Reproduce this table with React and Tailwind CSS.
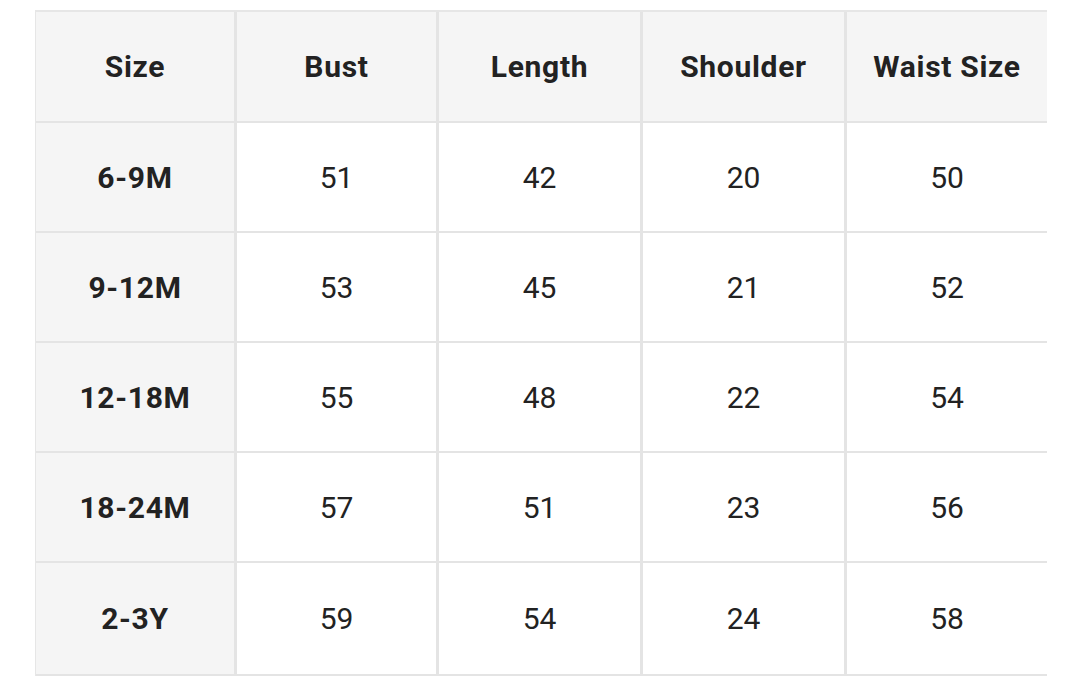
import React from 'react';

const headers = ['Size', 'Bust', 'Length', 'Shoulder', 'Waist Size'];

const rows = [
  ['6-9M', '51', '42', '20', '50'],
  ['9-12M', '53', '45', '21', '52'],
  ['12-18M', '55', '48', '22', '54'],
  ['18-24M', '57', '51', '23', '56'],
  ['2-3Y', '59', '54', '24', '58'],
];

const cols = 'grid grid-cols-[201px_202px_204px_204px_200px]';

export default function App() {
  return (
    <div className="w-[1080px] h-[687px] bg-white font-['Roboto',sans-serif] text-[#222] overflow-hidden">
      <div className="ml-[35px] mt-[10px] w-[1012px] border-l border-t-2 border-[#e6e6e6]">
        {/* header row */}
        <div className={`${cols} h-[111px] bg-[#f5f5f5]`}>
          {headers.map((h, i) => (
            <div
              key={h}
              className={
                'flex items-center justify-center text-[30px] font-bold tracking-[0.7px] border-b-2 border-[#e4e4e4] ' +
                (i < 4 ? 'border-r-[3px]' : '')
              }
            >
              {h}
            </div>
          ))}
        </div>

        {rows.map((row, r) => (
          <div
            key={row[0]}
            className={`${cols} ${r === rows.length - 1 ? 'h-[113px]' : 'h-[110px]'}`}
          >
            {row.map((cell, i) => (
              <div
                key={i}
                className={
                  'flex items-center justify-center text-[30px] border-b-2 border-[#e4e4e4] ' +
                  (i === 0 ? 'font-bold tracking-[0.7px] bg-[#f5f5f5] ' : 'font-normal bg-white ') +
                  (i < 4 ? 'border-r-[3px]' : '')
                }
              >
                {cell}
              </div>
            ))}
          </div>
        ))}
      </div>
    </div>
  );
}
